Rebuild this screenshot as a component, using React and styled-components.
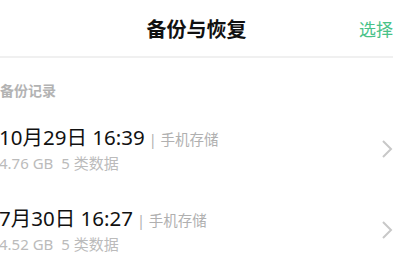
import React from "react";
import styled, { createGlobalStyle } from "styled-components";

const GlobalStyle = createGlobalStyle`
  body {
    margin: 0;
    background: #ffffff;
    font-family: "Noto Sans", "Noto Sans CJK SC", sans-serif;
  }
`;

const Page = styled.div`
  width: 408px;
  height: 268px;
  overflow: hidden;
  padding-right: 15px;
  box-sizing: border-box;
`;

const Header = styled.div`
  display: grid;
  grid-template-columns: 1fr auto 1fr;
  align-items: center;
  height: 56px;
  border-bottom: 2px solid #f0f0f0;
`;

const Title = styled.div`
  grid-column: 2;
  font-size: 20px;
  font-weight: 700;
  color: #111;
`;

const Action = styled.div`
  justify-self: end;
  font-size: 17px;
  color: #48c288;
`;

const SectionLabel = styled.div`
  margin-top: 23px;
  font-size: 14px;
  line-height: 20px;
  font-weight: 600;
  color: #b3b3b3;
`;

const List = styled.div`
  display: flex;
  flex-direction: column;
  gap: 32px;
  margin-top: 23px;
`;

const Row = styled.div`
  display: flex;
  align-items: center;
  justify-content: space-between;
  margin-left: -1px;
`;

const Info = styled.div`
  display: flex;
  flex-direction: column;
`;

const TimeLine = styled.div`
  display: flex;
  align-items: baseline;
  line-height: 26px;
`;

const Time = styled.span`
  font-size: 20.5px;
  color: #111;
`;

const Place = styled.span`
  font-size: 14.5px;
  color: #b0b0b0;
  margin-left: 4px;
`;

const Meta = styled.div`
  font-size: 15px;
  line-height: 20px;
  color: #bbbbbb;
  margin-top: 1px;
`;

const Chevron = () => (
  <svg width="12" height="20" viewBox="0 0 12 20">
    <path d="M2 2 L10 10 L2 18" fill="none" stroke="#c8c8c8" strokeWidth="2" />
  </svg>
);

const records = [
  { date: "10月29日 16:39", size: "4.76 GB", kinds: "5 类数据" },
  { date: "7月30日 16:27", size: "4.52 GB", kinds: "5 类数据" },
];

const App = () => {
  return (
    <Page>
      <GlobalStyle />
      <Header>
        <Title>备份与恢复</Title>
        <Action>选择</Action>
      </Header>
      <SectionLabel>备份记录</SectionLabel>
      <List>
        {records.map((r, i) => (
          <Row key={i}>
            <Info>
              <TimeLine>
                <Time>{r.date}</Time>
                <Place>| 手机存储</Place>
              </TimeLine>
              <Meta>
                {r.size}&nbsp;&nbsp;{r.kinds}
              </Meta>
            </Info>
            <Chevron />
          </Row>
        ))}
      </List>
    </Page>
  );
};

export default App;
